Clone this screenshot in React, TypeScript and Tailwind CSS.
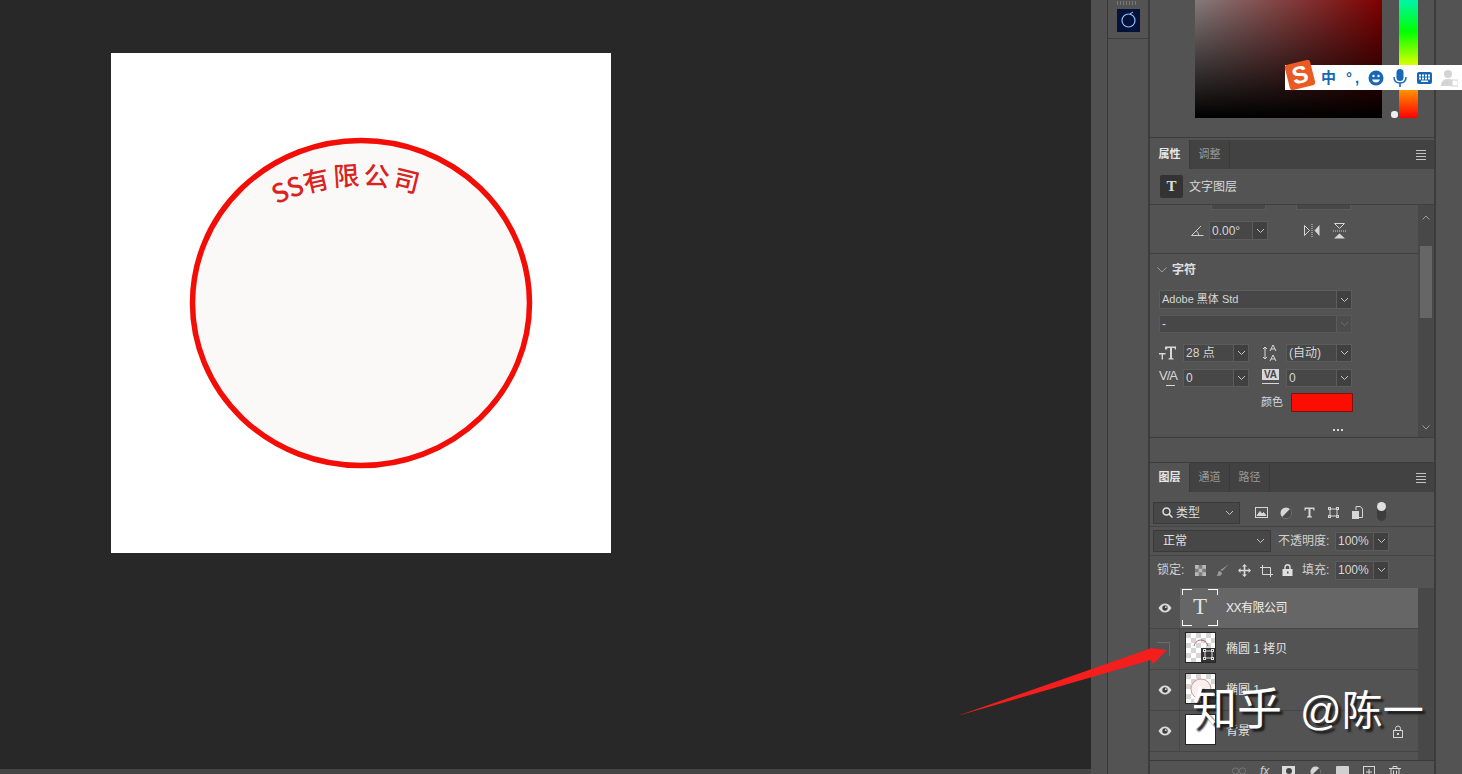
const CJK = 'font-["Liberation_Sans","Noto_Sans_CJK_SC",sans-serif]'

function Chevron({ dim }: { dim?: boolean }) {
  return (
    <svg width="9" height="6" viewBox="0 0 9 6" fill="none" stroke={dim ? '#6a6a6a' : '#c4c4c4'} strokeWidth="1">
      <path d="M1 1l3.500 3.500L8 1" />
    </svg>
  )
}

function Select({ text, className, dim, textClass = 'text-[12px]' }: { text: string; className: string; dim?: boolean; textClass?: string }) {
  return (
    <div className={`flex border border-[#5c5c5c] bg-[#474747] leading-none text-[#d6d6d6] ${textClass} ${className}`}>
      <div className="flex min-w-0 flex-1 items-center pl-[2px]">{text}</div>
      <div className={`flex w-[15px] items-center justify-center border-l border-[#5c5c5c] ${dim ? 'bg-[#4d4d4d]' : 'bg-[#404040]'}`}>
        <Chevron dim={dim} />
      </div>
    </div>
  )
}

function Tabs({ tabs }: { tabs: string[] }) {
  return (
    <div className="flex h-[29px] shrink-0 items-stretch bg-[#424242]">
      {tabs.map((t, i) => (
        <div
          key={t}
          className={`flex w-[40px] items-center justify-center border-r border-[#3a3a3a] text-[11px] ${i === 0 ? 'bg-[#535353] font-bold text-[#e8e8e8]' : 'text-[#9a9a9a]'}`}
        >
          {t}
        </div>
      ))}
      <div className="ml-auto flex w-[24px] flex-col items-center justify-center gap-[2px] pr-[2px]">
        <div className="h-px w-[10px] bg-[#c4c4c4]" />
        <div className="h-px w-[10px] bg-[#c4c4c4]" />
        <div className="h-px w-[10px] bg-[#c4c4c4]" />
        <div className="h-px w-[10px] bg-[#c4c4c4]" />
      </div>
    </div>
  )
}

function Eye() {
  return (
    <svg width="14" height="10" viewBox="0 0 14 10">
      <path d="M0.500 5C2.500 1.800 4.600 0.500 7 0.500s4.500 1.300 6.500 4.500c-2 3.200-4.100 4.500-6.500 4.500S2.500 8.200 0.500 5z" fill="#dcdcdc" />
      <circle cx="7" cy="5" r="2.700" fill="#3f3f3f" />
      <circle cx="7.800" cy="4.200" r="0.900" fill="#dcdcdc" />
    </svg>
  )
}

function Checker({ arc, children }: { arc: string; children?: React.ReactNode }) {
  return (
    <div className="relative h-[31px] w-[31px] border border-[#262626] bg-white">
      <svg width="29" height="29" viewBox="0 0 29 29" className="block">
        <defs>
          <pattern id={`chk-${arc}`} width="10" height="10" patternUnits="userSpaceOnUse">
            <rect width="10" height="10" fill="#fff" />
            <rect width="5" height="5" fill="#d6d6d6" />
            <rect x="5" y="5" width="5" height="5" fill="#d6d6d6" />
          </pattern>
        </defs>
        <rect width="29" height="29" fill={`url(#chk-${arc})`} />
        {arc === 'fill' && <ellipse cx="15" cy="15" rx="10" ry="10" fill="#fbeeee" stroke="#c88" strokeWidth="0.8" />}
        {arc === 'open' && <path d="M8 13c1-4 4-6 7-6s6 2 7 6" fill="none" stroke="#a33" strokeWidth="0.8" />}
      </svg>
      {children}
    </div>
  )
}

function ShapeBadge({ wide }: { wide?: boolean }) {
  return (
    <div className="absolute right-0 bottom-0 flex h-[14px] w-[14px] items-center justify-center bg-[#333]">
      {wide ? (
        <svg width="13" height="7" viewBox="0 0 13 7" fill="none" stroke="#ddd"><path d="M2 3.500h9" /><rect x="0.500" y="2" width="3" height="3" /><rect x="9.500" y="2" width="3" height="3" /></svg>
      ) : (
        <svg width="11" height="11" viewBox="0 0 11 11" fill="none" stroke="#ddd"><rect x="2" y="2" width="7" height="7" /><rect x="0.500" y="0.500" width="2" height="2" fill="#333" /><rect x="8.500" y="0.500" width="2" height="2" fill="#333" /><rect x="0.500" y="8.500" width="2" height="2" fill="#333" /><rect x="8.500" y="8.500" width="2" height="2" fill="#333" /></svg>
      )}
    </div>
  )
}

function LayerRow({ eye, thumb, name, lock }: { eye: boolean; thumb: React.ReactNode; name: string; lock?: boolean }) {
  return (
    <div className="flex h-[41px] items-center border-b border-[#454545]">
      <div className="flex w-[30px] shrink-0 items-center justify-center self-stretch border-r border-[#484848]">
        {eye ? <Eye /> : <div className="ml-[-2px] h-[14px] w-[13px] border-t border-r border-[#6b6b6b]" />}
      </div>
      <div className="mb-[4px] ml-[5px]">{thumb}</div>
      <div className="ml-[10px] text-[12px] text-[#e4e4e4]">{name}</div>
      {lock && (
        <svg className="mr-[14px] ml-auto" width="12" height="13" viewBox="0 0 12 13" fill="none" stroke="#d4d4d4">
          <path d="M3.500 5V3.500a2.500 2.500 0 015 0V5" />
          <rect x="1.500" y="5.500" width="9" height="7" />
          <rect x="5.500" y="8.500" width="1" height="1" fill="#d4d4d4" />
        </svg>
      )}
    </div>
  )
}

function Stamp() {
  return (
    <svg width="500" height="500" viewBox="0 0 500 500" className="block">
      <ellipse cx="250" cy="250" rx="168.500" ry="162.500" fill="#fbf9f8" stroke="#f20d06" strokeWidth="5.500" />
      <path id="stamp-arc" d="M60 322A190 190 0 01440 322" fill="none" />
      <text fontSize="26" fontWeight="500" fill="#d9231f" style={{ fontFamily: '"Noto Sans CJK SC", sans-serif' }}>
        <textPath href="#stamp-arc" startOffset="211">
          <tspan letterSpacing="0">SS</tspan>
          <tspan letterSpacing="3">有限公司</tspan>
        </textPath>
      </text>
    </svg>
  )
}

function FilterIcons() {
  return (
    <div className="flex items-center">
      <svg className="ml-[15px]" width="13" height="11" viewBox="0 0 13 11" fill="none" stroke="#d6d6d6"><rect x="0.500" y="0.500" width="12" height="10" /><path d="M2 8.500l3-4 2 2.500 1.500-1.500L11 8.500z" fill="#d6d6d6" /></svg>
      <svg className="ml-[12px]" width="12" height="12" viewBox="0 0 12 12"><circle cx="6" cy="6" r="5.500" fill="#d6d6d6" /><path d="M9.900 2.100A5.500 5.500 0 012.100 9.900z" fill="#4a4a4a" /></svg>
      <svg className="ml-[12px]" width="11" height="11" viewBox="0 0 11 11" fill="#d6d6d6"><path d="M0.500 0.500h10v3H9.500L9 2H6.500v7l1.500.5v1H3v-1l1.500-.5V2H2L1.500 3.500h-1z" /></svg>
      <svg className="ml-[13px]" width="11" height="11" viewBox="0 0 11 11" fill="none" stroke="#d6d6d6"><rect x="2" y="2" width="7" height="7" /><rect x="0.500" y="0.500" width="2" height="2" /><rect x="8.500" y="0.500" width="2" height="2" /><rect x="0.500" y="8.500" width="2" height="2" /><rect x="8.500" y="8.500" width="2" height="2" /></svg>
      <svg className="ml-[13px]" width="11" height="13" viewBox="0 0 11 13" fill="none" stroke="#d6d6d6"><path d="M4 4V0.500h4.500L10.500 3v8.500H7" /><rect x="0.500" y="5.500" width="6" height="7" fill="#d6d6d6" /></svg>
      <div className="relative ml-[14px] mb-[2px] h-[18px] w-[9px] rounded-full bg-[#3d3d3d]">
        <div className="absolute top-[-1px] left-[0px] h-[9px] w-[9px] rounded-full bg-[#e0e0e0]" />
      </div>
    </div>
  )
}

function LockIcons() {
  return (
    <div className="flex items-center">
      <svg className="ml-[8px]" width="11" height="11" viewBox="0 0 11 11"><rect width="11" height="11" fill="#7c7c7c" /><path d="M0 0h3.700v3.700H0zM7.300 0H11v3.700H7.300zM3.700 3.700h3.600v3.600H3.700zM0 7.300h3.700V11H0zM7.300 7.300H11V11H7.300z" fill="#b8b8b8" /></svg>
      <svg className="ml-[10px]" width="13" height="13" viewBox="0 0 13 13" fill="#9a9a9a"><path d="M12.500 0.500L6 7 4.500 6zM4 7c-2 0-2 2-2.200 3-.2.800-1 1.300-1.300 1.500 2 1 5.500.5 5.500-2.500z" /></svg>
      <svg className="ml-[9px]" width="13" height="13" viewBox="0 0 13 13" fill="#d8d8d8"><path d="M6.500 0L9 2.500H7.300v3.200h3.200V4L13 6.500 10.500 9V7.300H7.300v3.200H9L6.500 13 4 10.500h1.700V7.300H2.500V9L0 6.500 2.500 4v1.700h3.200V2.500H4z" /></svg>
      <svg className="ml-[9px]" width="13" height="13" viewBox="0 0 13 13" fill="none" stroke="#d8d8d8"><path d="M0 3.500h10.500M2.500 1v9.500M2.500 10.500H13M10.500 3.500V13" /></svg>
      <svg className="ml-[9px]" width="11" height="12" viewBox="0 0 11 12"><path d="M3 5V3.300a2.500 2.500 0 015 0V5" fill="none" stroke="#e0e0e0" strokeWidth="1.400" /><rect x="0.500" y="5" width="10" height="7" fill="#e0e0e0" /><rect x="5" y="7.500" width="1.500" height="2" fill="#555" /></svg>
    </div>
  )
}

function BottomIcons() {
  return (
    <div className="flex h-[14px] items-start border-t border-[#3a3a3a] pt-[5px] pl-[82px]">
      <svg width="14" height="10" viewBox="0 0 14 10" fill="none" stroke="#777"><rect x="0.500" y="2" width="6" height="6" rx="2.500" /><rect x="7.500" y="2" width="6" height="6" rx="2.500" /></svg>
      <div className="ml-[14px] text-[12px] leading-[10px] text-[#cfcfcf] italic">fx</div>
      <div className="ml-[13px] flex h-[10px] w-[13px] items-center justify-center bg-[#dcdcdc]"><div className="h-[6px] w-[6px] rounded-full bg-[#444]" /></div>
      <svg className="ml-[15px]" width="11" height="11" viewBox="0 0 12 12"><circle cx="6" cy="6" r="5.500" fill="#d6d6d6" /><path d="M9.900 2.100A5.500 5.500 0 012.100 9.900z" fill="#4a4a4a" /></svg>
      <div className="ml-[15px] h-[10px] w-[13px] rounded-[1px] bg-[#d0d0d0]" />
      <svg className="ml-[14px]" width="12" height="11" viewBox="0 0 12 11" fill="none" stroke="#d6d6d6"><rect x="0.500" y="0.500" width="11" height="11" /><path d="M6 3v6M3 6h6" /></svg>
      <svg className="ml-[14px]" width="12" height="11" viewBox="0 0 12 11" fill="none" stroke="#d6d6d6"><path d="M0 2.500h12M4 2.500V0.500h4v2M2 2.500v8.500h8V2.500M4.500 4.500v5M7.500 4.500v5" /></svg>
    </div>
  )
}

function ImeBar() {
  return (
    <div className="absolute top-[65px] left-[1285px] flex h-[25px] w-[177px] items-center bg-white">
      <div className="absolute top-[-3px] left-[2px] flex h-[26px] w-[26px] rotate-[-14deg] items-center justify-center rounded-[3px] bg-[#ea5a24] text-[24px] leading-none font-black text-white">
        S
      </div>
      <div className="ml-[36px] text-[15px] leading-none font-bold text-[#1767b5]">中</div>
      <div className="ml-[10px] text-[15px] leading-none font-bold tracking-[3px] text-[#1767b5]">°,</div>
      <svg className="ml-[6px]" width="16" height="16" viewBox="0 0 16 16"><circle cx="8" cy="8" r="7.500" fill="#1767b5" /><circle cx="5.500" cy="6" r="1.200" fill="#fff" /><circle cx="10.500" cy="6" r="1.200" fill="#fff" /><path d="M4 9.500h8c-.5 2-2 3-4 3s-3.500-1-4-3z" fill="#fff" /></svg>
      <svg className="ml-[9px]" width="14" height="18" viewBox="0 0 14 18" fill="#1767b5"><rect x="3.500" y="0" width="7" height="12" rx="3.500" /><path d="M1 8c0 4 2.500 6 6 6s6-2 6-6" fill="none" stroke="#1767b5" strokeWidth="1.400" /><rect x="6.200" y="14" width="1.600" height="4" /></svg>
      <svg className="ml-[10px]" width="15" height="12" viewBox="0 0 15 12"><rect width="15" height="12" rx="2" fill="#1767b5" /><path d="M2 2.500h2v2H2zM5 2.500h2v2H5zM8 2.500h2v2H8zM11 2.500h2v2h-2zM2 5.500h2v2H2zM5 5.500h2v2H5zM8 5.500h2v2H8zM11 5.500h2v2h-2zM4 8.500h7v1.500H4z" fill="#fff" /></svg>
      <svg className="ml-[9px]" width="17" height="18" viewBox="0 0 17 18" fill="#d4d4d4"><circle cx="7" cy="5" r="4" /><path d="M0 17c0-4 2-7 7-7 2 0 3 .5 4 1v6z" /><rect x="11" y="11" width="6" height="6" fill="none" stroke="#d4d4d4" /></svg>
    </div>
  )
}

export default function App() {
  return (
    <div className={`relative flex h-[774px] w-[1462px] overflow-hidden bg-[#535353] ${CJK}`}>
      {/* canvas */}
      <div className="flex w-[1091px] shrink-0 flex-col">
        <div className="h-[769px] bg-[#282828] pt-[53px] pl-[111px]">
          <div className="h-[500px] w-[500px] bg-white">
            <Stamp />
          </div>
        </div>
        <div className="h-[5px] bg-[#454545]" />
      </div>

      <div className="w-[17px] shrink-0 border-r border-[#383838] bg-[#505050]" />

      {/* collapsed thumbnails */}
      <div className="w-[42px] shrink-0 border-r-2 border-[#3c3c3c] bg-[#535353]">
        <div className="h-[39px] border-b border-[#3f3f3f] pt-[1px] pl-[9px]">
          <div className="h-[4px] w-[21px] bg-[repeating-linear-gradient(to_right,#777_0_1px,transparent_1px_3px)]" />
          <svg width="23" height="23" viewBox="0 0 23 23" className="mt-[4px] block">
            <rect width="23" height="23" fill="#04123a" />
            <circle cx="11.500" cy="11.500" r="6.500" fill="none" stroke="#8fc0ff" strokeWidth="1.200" />
            <path d="M13 5l3-2" stroke="#b8d8ff" />
          </svg>
        </div>
      </div>

      {/* panels */}
      <div className="flex w-[286px] shrink-0 flex-col border-r-2 border-[#3c3c3c]">
        <div className="flex h-[138px] shrink-0 border-b border-[#3c3c3c]">
          <div className="ml-[45px] h-[118px] w-[187px] bg-[linear-gradient(to_bottom,rgba(0,0,0,0),#000),linear-gradient(to_right,#857a7a,#800000)]" />
          <div className="relative ml-[17px] h-[118px] w-[19px] bg-[linear-gradient(to_bottom,#00f5a8,#00ff00_27%,#ffff00_60%,#ff8800_78%,#ff0000)]">
            <div className="absolute top-[111px] left-[-8px] h-[7px] w-[7px] rounded-[3px] bg-[#eee]" />
          </div>
        </div>

        <div className="mt-[2px] flex h-[298px] shrink-0 flex-col border-b border-[#3c3c3c]">
          <Tabs tabs={['属性', '调整']} />
          <div className="flex h-[36px] shrink-0 items-center border-b border-[#3f3f3f] pl-[10px]">
            <div className="flex h-[23px] w-[23px] items-center justify-center rounded-[2px] bg-[#333] font-['Liberation_Serif',serif] text-[15px] font-bold text-[#ddd]">
              T
            </div>
            <div className="ml-[6px] text-[12px] text-[#d8d8d8]">文字图层</div>
          </div>

          <div className="flex min-h-0 flex-1">
            <div className="w-[268px] shrink-0">
              <div className="flex h-[5px] pl-[61px]">
                <div className="h-[5px] w-[55px] border-x border-b border-[#5c5c5c] bg-[#474747]" />
                <div className="ml-[30px] h-[5px] w-[55px] border-x border-b border-[#5c5c5c] bg-[#474747]" />
              </div>
              <div className="flex h-[44px] items-center border-b border-[#3f3f3f] pb-[2px]">
                <svg className="ml-[41px]" width="13" height="11" viewBox="0 0 13 11" fill="none" stroke="#cfcfcf"><path d="M12.500 10.500H0.500L10 1M7.500 10.500c0-2.500-1-4-2.500-5" /></svg>
                <Select text="0.00°" className="ml-[5px] h-[19px] w-[59px]" />
                <svg className="ml-[36px]" width="16" height="13" viewBox="0 0 16 13" fill="#d6d6d6"><path d="M0.500 1.500l5 5-5 5z" fill="none" stroke="#d6d6d6" /><path d="M15.500 1v11l-5-5.500z" /><path d="M8 0v13" stroke="#d6d6d6" strokeDasharray="1 1" /></svg>
                <svg className="ml-[13px]" width="13" height="16" viewBox="0 0 13 16" fill="#d6d6d6"><path d="M1.500 0.500h10l-5 5z" fill="none" stroke="#d6d6d6" /><path d="M1 15.500h11l-5.500-5z" /><path d="M0 8h13" stroke="#d6d6d6" strokeDasharray="1 1" /></svg>
              </div>

              <div className="flex h-[31px] items-center pl-[7px]">
                <svg width="10" height="6" viewBox="0 0 10 6" fill="none" stroke="#9c9c9c"><path d="M0.500 0.500L5 5l4.500-4.500" /></svg>
                <div className="ml-[5px] text-[12px] font-bold text-[#e0e0e0]">字符</div>
              </div>
              <Select text="Adobe 黑体 Std" textClass="text-[11px]" className="mt-[5px] ml-[9px] h-[19px] w-[193px]" />
              <Select text="-" dim className="mt-[6px] ml-[9px] h-[18px] w-[193px] border-[#585858]" />

              <div className="mt-[11px] flex h-[18px] items-center pl-[9px]">
                <svg width="17" height="14" viewBox="0 0 17 14" fill="#d8d8d8"><path d="M6 0.500h11v3h-1L15.500 2H13v10l1.500.6v.9h-5v-.9L11 12V2H8.500L8 3.500H6zM0 7h6.500v1.500H4v5H2.600v-5H0z" /></svg>
                <Select text="28 点" className="ml-[7px] h-[18px] w-[66px]" />
                <svg className="ml-[13px]" width="17" height="18" viewBox="0 0 17 18" fill="none" stroke="#d8d8d8"><path d="M8 7l3-6 3 6M9 5h4M8 17l3-6 3 6M9 15h4M3 3v12M1 5l2-2 2 2M1 13l2 2 2-2" /></svg>
                <Select text="(自动)" className="ml-[7px] h-[18px] w-[66px]" />
              </div>
              <div className="mt-[7px] flex h-[18px] items-center pl-[9px]">
                <div className="relative h-[18px] w-[17px] text-[13px] leading-[13px] tracking-[-1px] text-[#d8d8d8]">
                  V/A
                  <div className="absolute bottom-[1px] left-[7px] h-px w-[9px] bg-[#d8d8d8]" />
                </div>
                <Select text="0" className="ml-[7px] h-[18px] w-[66px]" />
                <div className="relative ml-[13px] h-[18px] w-[17px]">
                  <div className="h-[11px] w-[17px] bg-[#d8d8d8] text-center text-[10px] leading-[11px] font-bold text-[#444]">VA</div>
                  <div className="absolute top-[14px] left-0 h-px w-[17px] bg-[#d8d8d8]" />
                </div>
                <Select text="0" className="ml-[7px] h-[18px] w-[66px]" />
              </div>

              <div className="mt-[6px] flex h-[19px] items-center pl-[111px]">
                <div className="text-[11px] text-[#d8d8d8]">颜色</div>
                <div className="ml-[8px] h-[19px] w-[62px] border border-[#7a1410] bg-[#fb0d02]" />
              </div>
              <div className="mt-[17px] flex justify-end gap-[2px] pr-[75px]">
                <div className="h-[2px] w-[2px] bg-[#d8d8d8]" />
                <div className="h-[2px] w-[2px] bg-[#d8d8d8]" />
                <div className="h-[2px] w-[2px] bg-[#d8d8d8]" />
              </div>
            </div>

            <div className="relative h-[232px] w-[16px] shrink-0 bg-[#484848]">
              <div className="absolute top-[41px] left-[2px] h-[72px] w-[12px] bg-[#666]" />
              <svg className="absolute top-[10px] left-[4px]" width="8" height="5" viewBox="0 0 8 5" fill="none" stroke="#9a9a9a"><path d="M0.500 4.500L4 1l3.500 3.500" /></svg>
              <svg className="absolute top-[220px] left-[4px]" width="8" height="5" viewBox="0 0 8 5" fill="none" stroke="#9a9a9a"><path d="M0.500 0.500L4 4l3.500-3.500" /></svg>
            </div>
          </div>
        </div>

        <div className="h-[25px] shrink-0 border-b border-[#3c3c3c]" />

        <div className="flex min-h-0 flex-1 flex-col">
          <Tabs tabs={['图层', '通道', '路径']} />
          <div className="flex h-[35px] shrink-0 items-center border-b border-[#444] pt-[7px] pl-[3px]">
            <div className="flex h-[22px] w-[87px] items-center border border-[#3a3a3a] bg-[#474747] pl-[8px] text-[12px] text-[#dcdcdc]">
              <svg width="11" height="11" viewBox="0 0 11 11" fill="none" stroke="#e0e0e0" strokeWidth="1.500"><circle cx="4.500" cy="4.500" r="3.500" /><path d="M7 7l3.500 3.500" /></svg>
              <span className="ml-[3px]">类型</span>
              <span className="mr-[5px] ml-auto"><Chevron /></span>
            </div>
            <FilterIcons />
          </div>
          <div className="flex h-[29px] shrink-0 items-center border-b border-[#444] pl-[3px] text-[12px] text-[#d0d0d0]">
            <div className="flex h-[22px] w-[118px] items-center border border-[#3a3a3a] bg-[#474747] pl-[9px] text-[#e0e0e0]">
              正常
              <span className="mr-[5px] ml-auto"><Chevron /></span>
            </div>
            <div className="ml-[7px] w-[57px]">不透明度:</div>
            <Select text="100%" className="h-[19px] w-[54px]" />
          </div>
          <div className="flex h-[32px] shrink-0 items-center pb-[4px] pl-[7px] text-[12px] text-[#d0d0d0]">
            <div className="w-[30px]">锁定:</div>
            <LockIcons />
            <div className="ml-[9px] w-[33px]">填充:</div>
            <Select text="100%" className="h-[19px] w-[54px]" />
          </div>

          <div className="flex">
            <div className="w-[268px] shrink-0">
              <div className="flex h-[41px] items-center border-b border-[#454545]">
                <div className="flex h-full w-[30px] shrink-0 items-center justify-center"><Eye /></div>
                <div className="flex h-full flex-1 items-center bg-[#666]">
                  <div className="relative mb-[2px] ml-[2px] flex h-[37px] w-[36px] items-center justify-center font-['Liberation_Serif',serif] text-[23px] text-[#e2e2e2]">
                    T
                    <div className="absolute top-0 left-0 h-[6px] w-[10px] border-t border-l border-white" />
                    <div className="absolute top-0 right-0 h-[6px] w-[10px] border-t border-r border-white" />
                    <div className="absolute bottom-0 left-0 h-[6px] w-[10px] border-b border-l border-white" />
                    <div className="absolute right-0 bottom-0 h-[6px] w-[10px] border-r border-b border-white" />
                  </div>
                  <div className="ml-[8px] text-[12px] tracking-[-0.5px] text-[#eee]">XX有限公司</div>
                </div>
              </div>
              <LayerRow eye={false} name="椭圆 1 拷贝" thumb={<Checker arc="open"><ShapeBadge /></Checker>} />
              <LayerRow eye name="椭圆 1" thumb={<Checker arc="fill"><ShapeBadge wide /></Checker>} />
              <LayerRow eye name="背景" lock thumb={<div className="h-[31px] w-[31px] border border-[#262626] bg-white" />} />
              <div className="h-[8px]" />
            </div>
            <div className="w-[16px] shrink-0 bg-[#484848]" />
          </div>
          <BottomIcons />
        </div>
      </div>

      <div className="flex-1 bg-[#535353]" />

      {/* overlays */}
      <ImeBar />
      <svg className="absolute top-0 left-0" width="1462" height="774" viewBox="0 0 1462 774" fill="none">
        <path d="M957 716L1149 649 1150 648 1167 650 1153 664 1151 660z" fill="#f41f1c" />
      </svg>
      <div className="absolute top-[684px] left-[1192px] flex items-baseline leading-[52px] whitespace-nowrap text-white [text-shadow:3px_3px_2px_#1c1c1c]">
        <span className="text-[45px]">知乎</span>
        <span className="ml-[18px] text-[41px]">@陈一</span>
      </div>
    </div>
  )
}
